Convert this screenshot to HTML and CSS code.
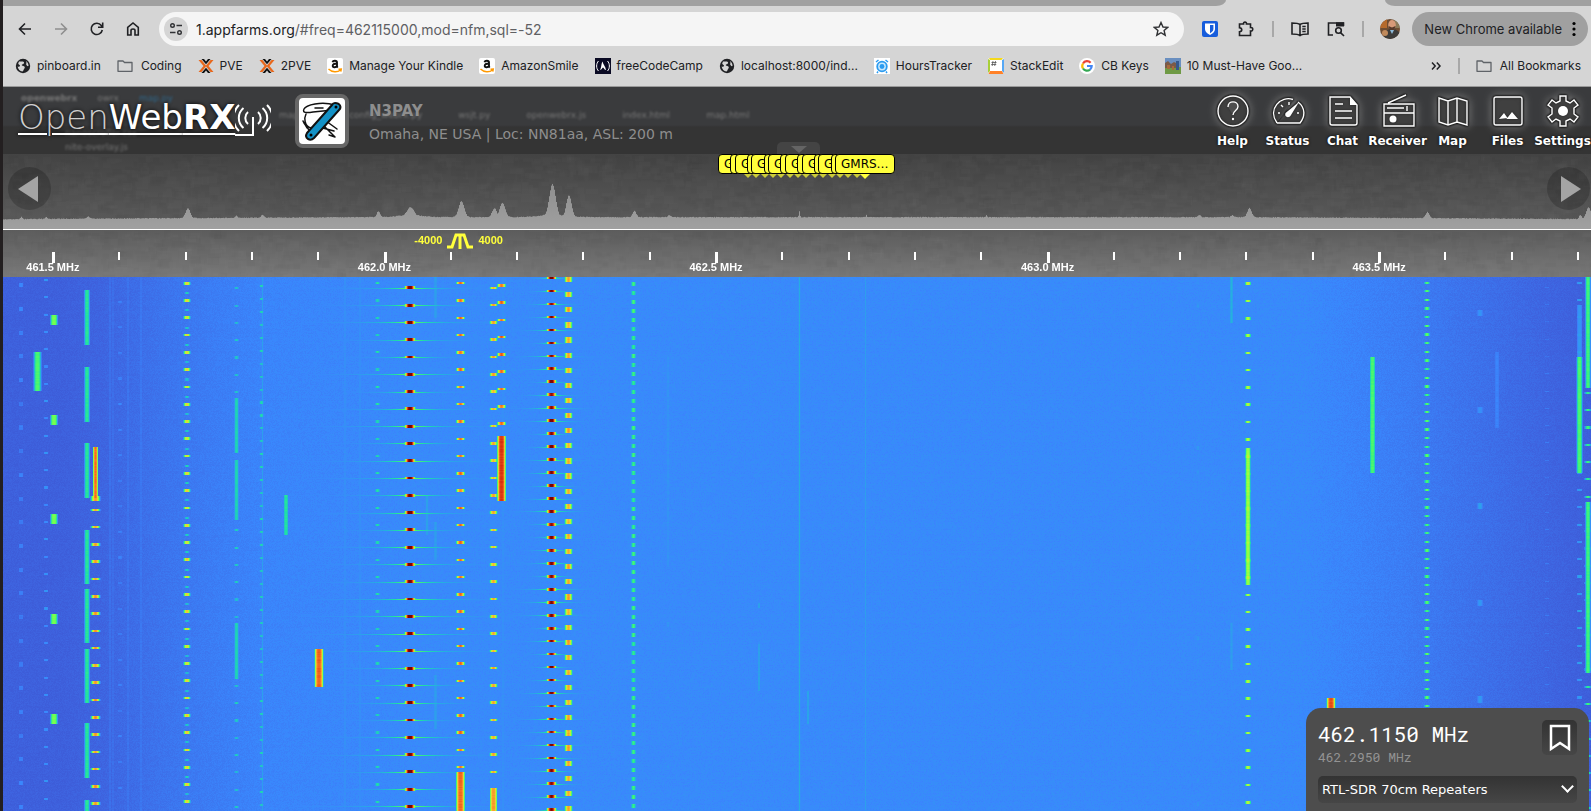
FILE: index.html
```html
<!DOCTYPE html>
<html lang="en">
<head>
<meta charset="utf-8">
<meta name="viewport" content="width=device-width, initial-scale=1">
<title>OpenWebRX | N3PAY</title>
<link rel="stylesheet" href="styles.css">
</head>
<body>
<svg class="defs" aria-hidden="true">
  <symbol id="globe" viewBox="0 0 16 16"><circle cx="8" cy="8" r="7.2" fill="#202124"/><path d="M4 3.4C6 4 7.600 3 9 4.200C9.600 5.400 8 6 7 6.600C6.400 7.200 7 8 8.400 8C10 8.200 10.200 9.800 9.200 10.800C8.400 11.600 8.600 13 7.400 13.600C5 13.200 3 11 2.600 8.400C3.400 8.800 4.600 9 5 8C5.200 7 3.400 6.800 3.200 5.600ZM11 3C12.600 4 13.600 6 13.500 8C12.500 8.500 11.500 7.500 11.200 6.500C11 5.500 12 5 11 3Z" fill="#d5d5d5"/></symbol>
  <symbol id="folder" viewBox="0 0 16 16"><path d="M1 13.300V3H6L7.500 4.500H15V13.300Z" fill="none" stroke="#5f6368" stroke-width="1.300" stroke-linejoin="round"/></symbol>
  <symbol id="proxmox" viewBox="0 0 16 16"><path d="M.5 2H3.500L8 7.500L12.500 2H15.500L10.500 8L15.500 14H12.500L8 8.500L3.500 14H.5L5.500 8Z" fill="#e8681c"/><path d="M3.500 1H6L8 3.500L10 1H12.500L8 6.300ZM3.500 15H6L8 12.500L10 15H12.500L8 9.700Z" fill="#111"/></symbol>
  <symbol id="amazon" viewBox="0 0 16 16"><rect width="16" height="16" rx="2" fill="#fff"/><path d="M5.500 4.200C6 2.200 10 2.200 10 4.500V8C10 8.800 10.300 9.200 10.700 9.600M10 5.500C7 5.500 5.600 6.300 5.700 8C6 10 9.500 9.600 10 7.500" fill="none" stroke="#111" stroke-width="1.900"/><path d="M1.500 11C5 14.500 10.500 14.500 13.500 12M11.500 11.200L14.300 11L13.800 13.700" fill="none" stroke="#f90" stroke-width="1.400"/></symbol>
</svg>

<div class="tabstrip"><span class="tab tab-left"></span><span class="tab tab-right"></span></div>

<div class="toolbar">
  <button class="tool" aria-label="Back"><svg viewBox="0 0 16 16"><path d="M14 8H3M8 2.500L2.500 8L8 13.500"/></svg></button>
  <button class="tool dim" aria-label="Forward"><svg viewBox="0 0 16 16"><path d="M2 8H13M8 2.500L13.500 8L8 13.500"/></svg></button>
  <button class="tool" aria-label="Reload"><svg viewBox="0 0 16 16"><path d="M13.300 9A5.600 5.600 0 1 1 12.300 4.500L13.500 6M13.700 1.500V6.300H9"/></svg></button>
  <button class="tool" aria-label="Home"><svg viewBox="0 0 16 16"><path d="M2.700 14V6.300L8 2L13.300 6.300V14H10V9.500C10 7.500 6 7.500 6 9.500V14Z"/></svg></button>
  <div class="omnibox">
    <button class="site" aria-label="Site information"><svg viewBox="0 0 16 16"><circle cx="4.500" cy="4.500" r="1.800"/><path d="M8.500 4.500H14M2 11.500H7.500"/><circle cx="11.500" cy="11.500" r="1.800"/></svg></button>
    <div class="url"><span>1.appfarms.org</span>/#freq=462115000,mod=nfm,sql=-52</div>
    <button class="star" aria-label="Bookmark this tab"><svg viewBox="0 0 16 16"><path d="M8 1.500L10 6L14.700 6.400L11.100 9.500L12.200 14.200L8 11.700L3.800 14.200L4.900 9.500L1.300 6.400L6 6Z"/></svg></button>
  </div>
  <button class="tool" aria-label="Bitwarden"><svg viewBox="0 0 16 16"><rect width="16" height="16" rx="2" fill="#175ddc" stroke="none"/><path d="M3 2.500H13V8C13 11 10 13 8 14C6 13 3 11 3 8Z" fill="#fff" stroke="none"/><path d="M8 4H11.400V8C11.400 10 9.500 11.500 8 12.300Z" fill="#175ddc" stroke="none"/></svg></button>
  <button class="tool" aria-label="Extensions"><svg viewBox="0 0 16 16"><path d="M1.500 3H5.500C5 .5 9 .5 8.500 3H12.500V6.500C15.500 6 15.500 10.500 12.500 10V14.500H1.500V10.800C4.500 10.500 4.500 7 1.500 6.700Z"/></svg></button>
  <i class="sep"></i>
  <button class="tool wide" aria-label="Reading mode"><svg viewBox="0 0 18 16"><path d="M9 3.500C7 2 4 2 1 2V13C4 13 7 13 9 14.500C11 13 14 13 17 13V2C14 2 11 2 9 3.500V14.500M11.300 5.500H14.700M11.300 8H14.700M11.300 10.500H14.700"/></svg></button>
  <button class="tool wide" aria-label="Search tabs"><svg viewBox="0 0 18 16"><path d="M6 14H1.500V2H16.500V5"/><path d="M9 1.300H17V5.500H9Z" fill="#202124" stroke="none"/><circle cx="11.500" cy="9.500" r="2.800"/><path d="M13.500 11.700L17 15"/></svg></button>
  <i class="sep"></i>
  <button class="avatar" aria-label="Profile"><svg viewBox="0 0 20 20"><defs><clipPath id="round"><circle cx="10" cy="10" r="10"/></clipPath></defs><g clip-path="url(#round)"><rect width="20" height="20" fill="#6f4d32"/><path d="M0 0H7V9H0Z" fill="#b56a2c"/><path d="M14 0H20V9H14Z" fill="#8a7a58"/><ellipse cx="12" cy="6" rx="3.800" ry="5" fill="#d79a78"/><path d="M8.500 7C9 13 15 13 15.500 7L12 8.500Z" fill="#573a2a"/><path d="M5 12L10 10L12 14L15 10L19 13V20H3Z" fill="#3d3c3a"/><path d="M10 11L12 15L14 11Z" fill="#8dbbdc"/><circle cx="5" cy="14" r="3" fill="#c08a5c"/></g></svg></button>
  <button class="update"><span>New Chrome available</span><svg viewBox="0 0 4 16"><circle cx="2" cy="2.500" r="1.600"/><circle cx="2" cy="8" r="1.600"/><circle cx="2" cy="13.500" r="1.600"/></svg></button>
</div>

<nav class="bookmarks" aria-label="Bookmarks">
  <a href="#"><svg><use href="#globe"/></svg>pinboard.in</a>
  <a href="#" class="dir"><svg><use href="#folder"/></svg>Coding</a>
  <a href="#"><svg><use href="#proxmox"/></svg>PVE</a>
  <a href="#"><svg><use href="#proxmox"/></svg>2PVE</a>
  <a href="#"><svg><use href="#amazon"/></svg>Manage Your Kindle</a>
  <a href="#"><svg><use href="#amazon"/></svg>AmazonSmile</a>
  <a href="#"><svg viewBox="0 0 16 16"><rect width="16" height="16" fill="#0a0a23"/><path d="M3.500 3C1 5.500 1 10.500 3.500 13M12.500 3C15 5.500 15 10.500 12.500 13" fill="none" stroke="#fff" stroke-width="1"/><path d="M5 12C6.500 10 6.300 5 7.500 3.500C8 6 10.500 8.500 11 12C9.500 12 9 10 8 9.500C7 10 7 11.500 5 12Z" fill="#fff"/></svg>freeCodeCamp</a>
  <a href="#"><svg><use href="#globe"/></svg>localhost:8000/ind...</a>
  <a href="#"><svg viewBox="0 0 16 16"><rect width="16" height="16" fill="#fff"/><circle cx="8" cy="8.500" r="4.800" fill="#c9e8fc" stroke="#2b9bf0" stroke-width="1.800"/><circle cx="8" cy="8.500" r="2.400" fill="#2b9bf0"/><path d="M2 4L4.500 2M14 4L11.500 2M4 13.500L3 15M12 13.500L13 15" stroke="#2b9bf0" stroke-width="1.500"/></svg>HoursTracker</a>
  <a href="#"><svg viewBox="0 0 16 16"><rect width="16" height="16" rx="2" fill="#fff"/><path d="M1 0H15L13.500 2H2Z" fill="#f5d91c"/><path d="M0 1L2 2V13L0 15Z" fill="#a8cf38"/><path d="M16 1L14 2V13L16 15Z" fill="#56a8f5"/><path d="M2 13H14L15.500 16H.5Z" fill="#ff8128"/><path d="M5 3L4.200 8M7.500 3L6.700 8M3.500 4.500H8.500M3.200 6.500H8.200" stroke="#555" stroke-width=".8"/></svg>StackEdit</a>
  <a href="#"><svg viewBox="0 0 16 16"><circle cx="8" cy="8" r="8" fill="#fff"/><g fill="none" stroke-width="2.200"><path d="M11.600 4.800A4.700 4.700 0 0 0 4 5.500" stroke="#ea4335"/><path d="M4 5.500A4.700 4.700 0 0 0 4 10.500" stroke="#fbbc05"/><path d="M4 10.500A4.700 4.700 0 0 0 11 11.600" stroke="#34a853"/><path d="M11 11.600A4.700 4.700 0 0 0 12.700 8H8" stroke="#4285f4"/></g></svg>CB Keys</a>
  <a href="#"><svg viewBox="0 0 16 16"><rect width="16" height="16" fill="#6a8fc0"/><path d="M0 9H16V16H0Z" fill="#6f9a45"/><path d="M0 5L3 3L6 6L9 4L13 6V10H0Z" fill="#7a5a48"/><path d="M11 3H14V12H11Z" fill="#35588c"/><path d="M2 7H5V11H2ZM7 8H9V12H7Z" fill="#a86a3a"/></svg>10 Must-Have Goo...</a>
  <div class="bookmarks-end">
    <button class="more" aria-label="More bookmarks"><svg viewBox="0 0 12 12"><path d="M2 2.500L5.200 6L2 9.500M6.800 2.500L10 6L6.800 9.500"/></svg></button>
    <i class="sep"></i>
    <a href="#" class="dir"><svg><use href="#folder"/></svg>All Bookmarks</a>
  </div>
</nav>

<header class="top">
  <div class="ghost" aria-hidden="true">
    <div class="ghost-path"><b>openwebrx</b><span>owrx</span><span class="blue">map.py</span></div>
    <div class="ghost-tabs"><span>map.py</span><span>config_webrx.py</span><span>wsjt.py</span><span>openwebrx.js</span><span>index.html</span><span>map.html</span></div>
    <div class="ghost-files"><span>nanoscroller.css</span><span>nite-overlay.js</span></div>
  </div>
  <div class="brand">
    <div class="logo"><span class="logo-open">Open</span><span>Web</span><b>RX</b></div>
    <svg class="waves" viewBox="0 0 36 34"><path d="M18 15V33H0" stroke-width="2"/><path d="M13 10A8 8 0 0 0 13 22M23 10A8 8 0 0 1 23 22M8.500 6A13 13 0 0 0 8.500 26M27.500 6A13 13 0 0 1 27.500 26M4 3A18 18 0 0 0 4 29M32 3A18 18 0 0 1 32 29" stroke-width="2"/></svg>
  </div>
  <svg class="station-logo" viewBox="0 0 46 46" role="img" aria-label="Station avatar"><g stroke="#111" stroke-width="1.500" stroke-linejoin="round" stroke-linecap="round" fill="#fff"><path d="M36 7C22 3 7 7 5 11C3 15 8 15 14 14L34 12Z"/><path d="M16 10H24M20 29L35 33M24 27L36 39L30 37M27 23L38 31M10 32L5 25L4 23L8 30M12 30C5 28 5 20 7 16" fill="none"/><path d="M36 5C41 5 43 9 40 12L15 40C11 44 5 40 8 35L33 7Q34 5 36 5Z" fill="#1391c6" stroke-width="2"/></g><circle cx="37" cy="9" r="1.500"/><circle cx="12" cy="37" r="1.500"/></svg>
  <div class="station"><strong>N3PAY</strong><span>Omaha, NE USA | Loc: NN81aa, ASL: 200 m</span></div>
  <div class="actions">
    <button><svg viewBox="0 0 34 34"><circle cx="17" cy="17" r="15"/><path d="M12 13C12 6 22 6.500 22 12.500C22 16.500 17 16.500 17 21"/><circle cx="17" cy="25" r="1.200" class="solid"/></svg><span>Help</span></button>
    <button><svg viewBox="0 0 34 34"><path d="M6 29C-4 15 10 1 22 5.500M27 8C35 14 34 23 29 29H6"/><path d="M28 8L20 21C18 25 13 23 14.500 19Z" class="solid"/><path d="M7 19H9M10 11L12 13M18 8V11M28 19H26"/></svg><span>Status</span></button>
    <button><svg viewBox="0 0 34 34"><path d="M4 3H24L31 11V29Q31 31 29 31H6Q4 31 4 29ZM9 10H17M9 17H26M9 24H26"/><path d="M24 3V11H31Z" class="solid"/></svg><span>Chat</span></button>
    <button><svg viewBox="0 0 34 34"><path d="M3 10V32H33V10ZM3 19H33M7 9L25 1M26 12V17M6 14H23"/><circle cx="12" cy="25" r="3.500" class="solid"/></svg><span>Receiver</span></button>
    <button><svg viewBox="0 0 34 34"><path d="M3 4L12 7L21 4L31 7V31L21 28L12 31L3 28ZM12 7V31M21 4V28"/></svg><span>Map</span></button>
    <button><svg viewBox="0 0 34 34"><rect x="3" y="3" width="28" height="28" rx="2"/><path d="M8 25L13 19L16.500 24ZM15.500 25L21 18L27 25Z" class="solid"/></svg><span>Files</span></button>
    <button><svg viewBox="0 0 34 34"><path d="M14 2H20V7L24 9L28 6L32 11L28 14V20L32 23L28 28L24 25L20 27V32H14V27L10 25L6 28L2 23L6 20V14L2 11L6 6L10 9L14 7Z"/><circle cx="17" cy="17" r="5" class="solid"/></svg><span>Settings</span></button>
  </div>
  <button class="drawer" aria-label="Toggle header"></button>
</header>

<section class="spectrum">
  <canvas id="spectrum"></canvas>
  <div class="tags" id="tags"></div>
  <button class="step step-left" aria-label="Tune down"></button>
  <button class="step step-right" aria-label="Tune up"></button>
</section>

<section class="scale">
  <canvas id="ticks"></canvas>
  <div class="passband"><span>-4000</span><svg viewBox="0 0 26 16"><path d="M0 14H5L9 2H17L21 14H26M13 1V16"/></svg><span>4000</span></div>
  <div class="freqs"><span>461.5 MHz</span><span>462.0 MHz</span><span>462.5 MHz</span><span>463.0 MHz</span><span>463.5 MHz</span></div>
</section>

<main class="waterfall">
  <canvas id="waterfall"></canvas>
  <div class="receiver">
    <div class="tuning">
      <div><div class="freq">462.1150 MHz</div><div class="cursor-freq">462.2950 MHz</div></div>
      <button aria-label="Add bookmark"><svg viewBox="0 0 24 30"><path d="M3 3H21V26L12 20L3 26Z"/></svg></button>
    </div>
    <select aria-label="Profile"><option>RTL-SDR 70cm Repeaters</option></select>
  </div>
</main>
<script src="app.js"></script>
</body>
</html>
```

FILE: styles.css
```css
* { box-sizing: border-box; }
body { margin: 0; padding-left: 3px; height: 100vh; overflow: hidden; display: flex; flex-direction: column; background: #231f20; font-family: "DejaVu Sans", Verdana, sans-serif; color: #fff; }
button { border: 0; padding: 0; background: none; font: inherit; color: inherit; }
a { color: inherit; text-decoration: none; }
canvas { display: block; position: absolute; inset: 0; width: 100%; height: 100%; }
.defs { display: none; }

.tabstrip { display: flex; justify-content: space-between; flex: none; height: 6px; background: #d5d5d5; }
.tab { background: #a0a0a0; }
.tab-left { width: 77%; border-bottom-right-radius: 10px 6px; }
.tab-right { width: 13%; border-bottom-left-radius: 10px 6px; }

.toolbar, .bookmarks { flex: none; display: flex; align-items: center; background: #d5d5d5; color: #202124; font-family: Inter, Roboto, sans-serif; }
.toolbar { height: 46px; padding: 0 3px 0 4px; }
.tool { width: 36px; height: 34px; display: grid; place-items: center; }
.tool svg { width: 16px; height: 16px; fill: none; stroke: #202124; stroke-width: 1.600; }
.tool.wide svg { width: 18px; }
.tool.dim svg { stroke: #8f8f8f; }
.sep { width: 2px; height: 16px; margin: 0 8px; background: #a8a8a8; }
.omnibox { flex: 1; display: flex; align-items: center; height: 34px; margin: 0 8px; padding: 0 15px 0 5px; border-radius: 17px; background: #f5f5f5; }
.site { width: 24px; height: 24px; border-radius: 50%; background: #d5d5d5; display: grid; place-items: center; }
.site svg, .star svg { width: 16px; height: 16px; fill: none; stroke: #303134; stroke-width: 1.400; display: block; }
.url { flex: 1; margin-left: 8px; font-size: 14px; color: #5f6063; }
.url span { color: #202124; }
.avatar { margin: 0 12px 0 8px; }
.avatar svg { display: block; width: 20px; height: 20px; }
.update { display: flex; align-items: center; gap: 10px; height: 34px; padding: 0 12px; border-radius: 17px; background: #a0a0a0; font-size: 13px; }
.update svg { width: 4px; height: 16px; }

.bookmarks { height: 35px; padding: 0 10px 7px 12px; gap: 16px; font-size: 12px; white-space: nowrap; border-bottom: 1px solid #999; }
.bookmarks a { display: flex; align-items: center; gap: 6px; }
.bookmarks .dir { gap: 8px; }
.bookmarks a svg { width: 16px; height: 16px; }
.bookmarks-end { display: flex; align-items: center; margin-left: auto; }
.bookmarks-end .sep { margin: 0 16px; }
.more svg { display: block; width: 12px; height: 12px; fill: none; stroke: #202124; stroke-width: 1.500; }

.top { position: relative; flex: none; display: flex; height: 67px; background: linear-gradient(#3a3b3d 0 38px, #343434 40px); }
.ghost { position: absolute; inset: 0; overflow: hidden; color: #777; font-size: 9px; filter: blur(1px); }
.ghost div { display: flex; }
.ghost-path { gap: 20px; padding: 6px 0 0 18px; }
.ghost .blue { color: #30678a; }
.ghost-tabs { gap: 36px; padding: 7px 0 0 276px; }
.ghost .ghost-files { flex-direction: column; gap: 4px; padding: 8px 0 0 62px; }
.brand { position: relative; display: flex; width: 292px; padding: 10px 0 0 15px; }
.logo { font-size: 34px; line-height: 40px; text-shadow: 0 0 4px #000; white-space: nowrap; text-decoration: underline; text-decoration-thickness: 2px; text-underline-offset: 4px; }
.logo-open { color: #d0d0d0; font-weight: 200; }
.waves { flex: none; width: 36px; height: 34px; margin-top: 5px; fill: none; stroke: #fff; }
.station-logo { position: relative; flex: none; width: 54px; height: 54px; margin-top: 7px; border: 4px solid #676767; border-radius: 8px; background: #fff; }
.station { position: relative; display: flex; flex-direction: column; margin-left: 20px; padding-top: 13px; color: #8e8e8e; font-size: 14px; line-height: 23px; white-space: nowrap; }
.station strong { font-size: 15px; }
.actions { position: relative; display: flex; margin: 0 1px 0 auto; }
.actions button { width: 55px; display: flex; flex-direction: column; align-items: center; padding-top: 7px; font-size: 12px; font-weight: bold; line-height: 22px; white-space: nowrap; text-shadow: 0 0 3px #000; }
.actions svg { width: 34px; height: 34px; margin-bottom: 2px; fill: #77777766; stroke: #fff; stroke-width: 1.400; filter: drop-shadow(0 0 1px #000) drop-shadow(0 0 1px #000) drop-shadow(0 0 4px #888); }
.actions .solid { fill: #fff; stroke: none; }
.drawer { position: absolute; left: 50%; bottom: 0; width: 43px; height: 12px; margin-left: -20px; border-radius: 5px 5px 0 0; background: #444; }
.drawer::after { content: ""; position: absolute; top: 4px; left: 14px; border: 8px solid transparent; border-top: 7px solid #646464; border-bottom: 0; }

.spectrum { position: relative; flex: none; height: 75px; background: linear-gradient(#434343, #5c5c5c); }
.tags { position: absolute; top: 0; left: 715px; width: 180px; height: 24px; }
.tag { position: absolute; top: 0; height: 20px; padding: 0 5px; border: 1px solid #000; border-radius: 4px; background: #ffff3c; color: #000; font-size: 12px; line-height: 18px; text-align: left; }
.tag::after { content: ""; position: absolute; left: 50%; top: 19px; margin-left: -4px; border: 4px solid transparent; border-top-color: #cccc38; border-bottom: 0; }
.tag:last-child::after { border-top-color: #ffff3c; border-width: 5px; border-bottom: 0; margin-left: -5px; }
.step { position: absolute; top: 13px; width: 43px; height: 43px; border-radius: 50%; background: #00000030; display: grid; place-items: center; }
.step::after { content: ""; border: 13px solid transparent; }
.step-left { left: 5px; padding-right: 4px; }
.step-left::after { border-right: 20px solid #a4a4a4; border-left: 0; }
.step-right { right: 1px; padding-left: 4px; }
.step-right::after { border-left: 20px solid #a4a4a4; border-right: 0; }

.scale { position: relative; flex: none; height: 48px; overflow: hidden; border-top: 1px solid #fff; background: linear-gradient(#5c5c5c, #787878); font: bold 11px "Liberation Sans", Arial, sans-serif; }
.passband { position: relative; display: flex; align-items: center; gap: 5px; height: 22px; padding-left: 25.9%; color: #ffff3c; line-height: 20px; }
.passband svg { width: 26px; height: 16px; fill: none; stroke: #ffff3c; stroke-width: 3; }
.passband span { padding-bottom: 2px; }
.freqs { position: relative; display: flex; margin-left: -7.3%; width: 104.400%; padding-top: 9px; line-height: 12px; text-align: center; }
.freqs span { flex: 1; }

.waterfall { position: relative; flex: 1; display: flex; justify-content: flex-end; align-items: flex-end; background: #3a86fc; }
.receiver { position: relative; width: 283px; margin-right: 2px; padding: 12px 12px 8px; border-radius: 15px 15px 0 0; background: #4d4d4d; }
.tuning { display: flex; justify-content: space-between; margin-bottom: 10px; font-family: "Roboto Mono", "DejaVu Sans Mono", monospace; }
.freq { font-size: 21px; line-height: 28px; }
.cursor-freq { font-size: 13px; line-height: 18px; color: #939393; }
.tuning button, .receiver select { border-radius: 5px; background-color: #3c3c3c; background-image: linear-gradient(#333, #464646); }
.tuning button { width: 35px; height: 35px; display: grid; place-items: center; }
.tuning svg { width: 24px; height: 30px; fill: none; stroke: #fff; stroke-width: 2.500; }
.receiver select { display: block; width: 100%; height: 27px; padding: 0 4px; border: 0; appearance: none; color: #fff; font: 13px "DejaVu Sans", Verdana, sans-serif; }
.receiver::after { content: ""; position: absolute; right: 17px; bottom: 20px; width: 7px; height: 7px; border: solid #fff; border-width: 0 2px 2px 0; transform: rotate(45deg); }
```

FILE: app.js
```js
const DESIGN_WIDTH = 1588;
// height of one waterfall line in pixels
const LINE = 1.035;
let seed = 7;
const rand = () => (seed = (seed * 16807) % 2147483647) / 2147483647;

function open(id) {
  const c = document.getElementById(id);
  c.width = c.clientWidth;
  c.height = c.clientHeight;
  return [c.getContext('2d'), c.width, c.height, c.width / DESIGN_WIDTH];
}

function grain(g, w, h) {
  for (let i = 0; i < w * h / 40; i++) {
    g.fillStyle = rand() < .5 ? 'rgba(0,0,0,.015)' : 'rgba(255,255,255,.01)';
    g.fillRect(rand() * w, rand() * h, 4 + rand() * 10, 3 + rand() * 6);
  }
}

function drawSpectrum() {
  const [g, w, h, k] = open('spectrum');
  grain(g, w, h);
  // [x, peak height, half width, skirt height]
  const peaks = [[18, 2, 1], [43, 2, 1], [85, 2, 1.5], [184.5, 10, 2.5], [233, 2, 1], [259, 3, 1.5], [375, 6, 1.8],
    [407, 10, 4, 4], [458, 16, 3], [491, 9, 2.5], [499, 14, 3], [549, 33, 3.5, 5], [565.5, 22, 2.8], [631, 6, 2],
    [666, 2, 1.5], [796, 6, .6], [863, 2, .6], [983, 2, .6], [1196, 2, 1.5], [1229, 2, 1.5], [1246, 9, 2.3],
    [1424, 6, 2], [1577, 4, 1.5], [1585, 12, 2.5]];
  const fill = g.createLinearGradient(0, 25, 0, h);
  fill.addColorStop(0, '#8c8c8c');
  fill.addColorStop(1, '#a0a0a0');
  g.fillStyle = fill;
  for (let px = 0; px < w; px++) {
    const x = px / k;
    let top = 11.5 - 2 * Math.max(0, 1 - x / 350) - 2 * Math.max(0, (x - 1250) / 340) + rand() * .7;
    let lift = 0;
    for (const [cx, ph, hw, sk] of peaks) {
      const d = Math.abs(x - cx);
      lift = Math.max(lift, ph * Math.exp(-Math.pow(d / hw, 2) * .6), (sk || 0) * Math.exp(-d / 10));
    }
    g.fillRect(px, h - top - lift, 1, top + lift);
  }
}

function drawTicks() {
  const [g, w, h, k] = open('ticks');
  grain(g, w, h);
  g.fillStyle = '#fff';
  for (let i = 0; i < 24; i++) {
    const major = i % 5 === 0;
    g.fillRect(Math.round((50 + i * 66.3) * k) - 1, 22, major ? 3 : 2, major ? 11 : 8);
  }
}

function drawTags() {
  const box = document.getElementById('tags');
  for (let i = 0; i < 15; i++) {
    const wide = i % 2 === 0;
    const t = document.createElement('button');
    t.className = 'tag';
    t.style.left = Math.round(i * 8.35 + (wide ? 0 : 4)) + 'px';
    t.style.width = (wide ? 60 : 52) + 'px';
    t.textContent = i === 14 ? 'GMRS…' : wide ? 'G' : '';
    box.append(t);
  }
}

const stops = [[0, 58, 72, 196], [.1, 62, 98, 222], [.2, 58, 135, 253], [.3, 38, 172, 226], [.4, 30, 222, 168],
  [.5, 86, 252, 96], [.6, 170, 252, 60], [.7, 240, 208, 50], [.8, 252, 130, 38], [.9, 216, 46, 14], [1, 122, 4, 3]];
function colour(v) {
  v = Math.min(.9999, Math.max(0, v));
  const i = Math.floor(v * 10), f = v * 10 - i, a = stops[i], b = stops[i + 1];
  return [1, 2, 3].map(n => a[n] + (b[n] - a[n]) * f);
}

function drawWaterfall() {
  const [g, w, h, k] = open('waterfall');
  const lines = h / LINE;
  const lv = new Float32Array(w * h);
  const floor = [[0, .09], [60, .09], [100, .105], [150, .14], [200, .165], [260, .19], [420, .205], [1300, .205], [1400, .17], [1500, .125], [1600, .08]];
  const row = new Float32Array(h).map(() => rand() * .006);
  for (let x = 0; x < w; x++) {
    const at = Math.min(x / k, 1599);
    const i = floor.findIndex(p => p[0] > at), a = floor[i - 1], b = floor[i];
    const base = a[1] + (b[1] - a[1]) * (at - a[0]) / (b[0] - a[0]);
    for (let y = 0; y < h; y++) lv[y * w + x] = base + (rand() - .5) * .03 + row[y];
  }
  const set = (x, y, v) => {
    if (x >= 0 && x < w && y >= 0 && y < h && lv[y * w + x] < v) lv[y * w + x] = v;
  };
  // x, first and last line, half width, level, edge falloff
  function bar(x, y0, y1, hw, v, fall = 3) {
    const c = (x - 3) * k;
    for (let y = Math.round(y0 * LINE); y < Math.round(y1 * LINE); y++) {
      const vv = v + (rand() - .5) * .025;
      for (let px = Math.floor(c - hw - 1); px <= c + hw + 1; px++) {
        const d = Math.abs(px + .5 - c) / (hw + .5);
        if (d < 1.2) set(px, y, .17 + (vv - .17) * Math.max(0, 1 - Math.pow(d, fall) * .8));
      }
    }
  }
  function dots(x, first, step, tall, hw, v, end = lines, skirt = 0) {
    for (let y = first; y < end; y += step) {
      bar(x, y - tall / 2, y + tall / 2, hw, v - rand() * .05, 2);
      if (!skirt) continue;
      const reach = skirt * (.7 + rand() * .6), c = (x - 3) * k;
      for (let d = -reach; d < reach; d++) {
        const f = 1 - Math.abs(d) / reach;
        set(Math.round(c + d), Math.round(y * LINE), .2 + .3 * f * f * f * f + .06 * f);
      }
    }
  }
  const bars = (x, spans, hw, v) => spans.forEach(([a, b]) => bar(x, a, b, hw, v));
  const P = 16.7;

  [345, 360, 503].forEach(x => bar(x, 0, lines, .5, .225));
  [[110, .135], [113, .13], [128, .145], [141, .155]].forEach(([x, v]) => bar(x, 0, lines, .5, v));
  bar(262.5, 0, lines, .5, .26); bar(799.5, 0, lines, .6, .3); bar(865.5, 0, lines, .5, .26);
  dots(21, 8, 22.9, 4, 1.5, .2); dots(46, 3, P, 2, 1.5, .25); dots(120, 24, 24.7, 2, 1, .2);
  bars(54, [[37, 46], [133, 143], [229, 239], [326, 335], [422, 432]], 3, .54);
  bar(37.5, 72, 110, 3, .48);
  bars(87, [[13, 66], [87, 140], [160, 214], [244, 297], [301, 354], [359, 412], [431, 484], [505, 540]], 2, .42);
  bar(95.5, 164, 214, 2, .82); dots(95.5, 214, 100, 4, 4, .78, 215); dots(95.5, 225, P, 2.4, 4, .8);
  dots(187, 6, P, 2.6, 3, .72); dots(187, 15.5, P, 2, 1.8, .38);
  dots(236.5, 11, P, 2, 1.8, .38); bars(236.5, [[117, 170], [177, 235], [334, 388]], 1.6, .38);
  dots(261.5, 8.5, 12.53, 2, 1.6, .4);
  bar(286, 211, 249, 1.8, .41); bar(319, 359, 396, 4, .84);
  dots(377.5, 6, P, 2.2, 2, .42);
  dots(410, 10.5, P, 2.8, 5, 1.07, lines, 90);
  bars(435.5, [[0, 40], [237, 273], [385, 437]], 1.2, .26); bar(427, 211, 249, 1.2, .27);
  dots(460.5, 6, P, 2.4, 4, .85, 478); bar(460.5, 478, lines, 4, .83);
  dots(493.5, 10.5, P, 2.4, 3.5, .78, 490); bar(493.5, 494, lines, 3.3, .77);
  dots(501.5, 8, P, 2.4, 4, .86, 150); bar(501.5, 154, 216, 4, .89);
  dots(551.5, 1, 12.53, 2.6, 4.6, 1.03, lines, 40);
  dots(568.5, 2.5, 14.6, 5, 3.5, .78);
  dots(633.5, 6.5, 8.7, 4, 2, .48);
  bar(668, 76, 280, 1.2, .23); dots(668, 290, 22.9, 4, 1.5, .24);
  bars(759, [[315, 320], [355, 400]], 1, .27); bar(808, 400, 432, 1, .28);
  dots(1182, 5, P, 2, 1.5, .23); dots(1198, 5, 22.9, 4, 1.5, .25);
  bar(1231.5, 0, 44, 1, .31); bar(1231.5, 334, 380, 1, .26);
  dots(1248, 6.5, P, 2.4, 2.7, .65); bar(1248, 165, 298, 2.2, .58);
  dots(1297, 6, P, 1, 1, .22); bar(1331, 407, 420, 4, .86);
  bar(1372.5, 77, 189, 2.3, .48);
  dots(1427, 5.5, 8.35, 2.2, 2.3, .52);
  dots(1480, 35, 93.3, 6, 1.8, .28); bar(1497, 72, 146, 1, .19); dots(1547, 10, P, 1, 1.2, .18);
  dots(1579.5, 5.5, P, 2, 2, .29); bar(1579.5, 27, 77, 1.5, .24); bar(1579.5, 77, 189, 2.3, .48);
  dots(1588, 112, P, 2, 2.5, .48); bars(1588, [[0, 107], [217, 383]], 2, .46);

  const img = g.createImageData(w, h);
  for (let i = 0; i < lv.length; i++) {
    const c = colour(lv[i]);
    img.data.set([c[0], c[1], c[2], 255], i * 4);
  }
  g.putImageData(img, 0, 0);
}

drawTags();
function draw() { drawSpectrum(); drawTicks(); drawWaterfall(); }
draw();
addEventListener('resize', draw);
```
